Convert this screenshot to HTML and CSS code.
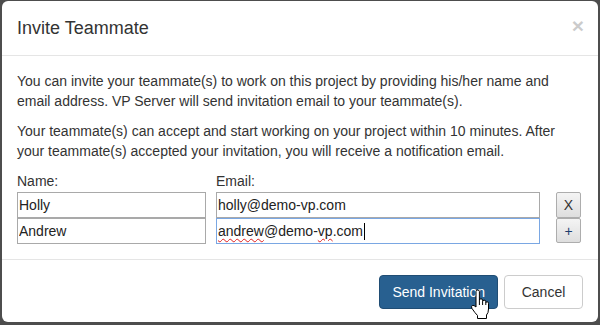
FILE: index.html
```html
<!DOCTYPE html>
<html lang="en">
<head>
    <meta charset="UTF-8">
    <meta name="viewport" content="width=device-width, initial-scale=1.0">
    <title>Invite Teammate</title>
    <link rel="stylesheet" href="styles.css">
</head>
<body>
    <div class="modal">
        <div class="modal-header">
            <h4 class="modal-title">Invite Teammate</h4>
            <button class="close">&times;</button>
        </div>

        <div class="modal-body">
            <p>You can invite your teammate(s) to work on this project by providing his/her name and email address. VP Server will send invitation email to your teammate(s).</p>
            <p>Your teammate(s) can accept and start working on your project within 10 minutes. After your teammate(s) accepted your invitation, you will receive a notification email.</p>

            <div class="invite-grid">
                <label for="name1">Name:</label>
                <label for="email1">Email:</label>
                <span></span>

                <input type="text" id="name1" class="field" value="Holly">
                <input type="text" id="email1" class="field" value="holly@demo-vp.com">
                <button class="row-btn">X</button>

                <input type="text" class="field" value="Andrew">
                <div class="field focused"><span class="misspelt">andrew</span>@demo-<span class="misspelt">vp</span>.com<span class="caret"></span></div>
                <button class="row-btn plus">+</button>
            </div>
        </div>

        <div class="modal-footer">
            <button class="btn btn-primary">Send Invitation</button>
            <button class="btn btn-default">Cancel</button>
        </div>

        <!-- mouse pointer hovering the send button -->
        <svg class="pointer" width="21" height="31" viewBox="0 0 21 31">
            <path d="M7 2.5 Q7 1 8.7 1 Q10.4 1 10.4 2.5 V11 Q10.4 9.8 12 9.8 Q13.6 9.8 13.6 11.3 V12.5 Q13.6 11.2 15.2 11.2 Q16.8 11.2 16.8 12.7 V13.8 Q16.8 12.8 18.2 12.8 Q19.5 12.8 19.5 14.3 V20 Q19.5 24 17.5 26 V29.5 H8.5 V26.5 Q6 24 3 19.5 Q1.8 17.5 3.3 16.5 Q4.8 15.8 7 18 Z" fill="#fff" stroke="#000" stroke-width="1" stroke-linejoin="round"/>
            <path d="M10.4 11 V16 M13.6 12.5 V16 M16.8 13.8 V16" fill="none" stroke="#000" stroke-width="1"/>
        </svg>
    </div>
</body>
</html>
```

FILE: styles.css
```css
html, body {
    margin: 0;
    height: 100%;
}
body {
    background-color: #4d4d4d;
    font-family: "Liberation Sans", Arial, sans-serif;
    font-size: 14px;
    line-height: 20px;
    color: #333;
    padding: 1px 2px 0 2px;
    box-sizing: border-box;
}
.modal {
    position: relative;
    background-color: #fff;
    border-radius: 6px;
    overflow: hidden;
}
.modal-header {
    display: flex;
    justify-content: space-between;
    align-items: center;
    padding: 15px;
    border-bottom: 1px solid #e5e5e5;
}
.modal-title {
    margin: 0;
    font-size: 18px;
    font-weight: normal;
    line-height: 24px;
}
.close {
    background: none;
    border: none;
    padding: 0;
    font-family: "Liberation Sans", Arial, sans-serif;
    font-size: 21px;
    font-weight: bold;
    line-height: 1;
    color: #000;
    opacity: 0.2;
    margin-top: -6px;
    margin-right: -1px;
}
.modal-body {
    padding: 15px;
}
.modal-body p {
    margin: 0 0 10px;
}
.invite-grid {
    display: grid;
    grid-template-columns: 189px 324px 25px;
    grid-template-rows: 21px 26px 26px;
    column-gap: 10px;
}
.invite-grid label {
    line-height: 20px;
}
.field {
    box-sizing: border-box;
    height: 26px;
    margin: 0;
    padding: 0 1px;
    border: 1px solid #a9a9a9;
    font-family: "Liberation Sans", Arial, sans-serif;
    font-size: 14px;
    line-height: 24px;
    color: #222;
    background: #fff;
    outline: none;
}
.focused {
    border-color: #7aa7e3;
    white-space: nowrap;
}
.misspelt {
    text-decoration: underline wavy #e02020;
    text-decoration-thickness: 1px;
    text-underline-offset: 2px;
}
.caret {
    display: inline-block;
    width: 1px;
    height: 17px;
    background: #000;
    vertical-align: -4px;
    margin-left: 1px;
}
.row-btn {
    box-sizing: border-box;
    height: 26px;
    margin: 0 0 0 6px;
    padding: 0;
    width: 25px;
    border: 1px solid #adadad;
    border-radius: 2px;
    background: linear-gradient(#f4f4f4, #dedede);
    font-family: "Liberation Sans", Arial, sans-serif;
    font-size: 14px;
    color: #333;
}
.plus {
    height: 25px;
    color: #1d3f6e;
}
.modal-footer {
    display: flex;
    justify-content: flex-end;
    gap: 6px;
    padding: 15px 15px 13px;
    border-top: 1px solid #e5e5e5;
}
.btn {
    box-sizing: border-box;
    height: 34px;
    padding: 6px 12px;
    border: 1px solid transparent;
    border-radius: 4px;
    font-family: "Liberation Sans", Arial, sans-serif;
    font-size: 14px;
    line-height: 20px;
    cursor: pointer;
}
.btn-primary {
    color: #fff;
    background-color: #286090;
    border-color: #204d74;
}
.btn-default {
    min-width: 79px;
    color: #333;
    background-color: #fff;
    border-color: #ccc;
}
.pointer {
    position: absolute;
    left: 467px;
    top: 288px;
}
```
